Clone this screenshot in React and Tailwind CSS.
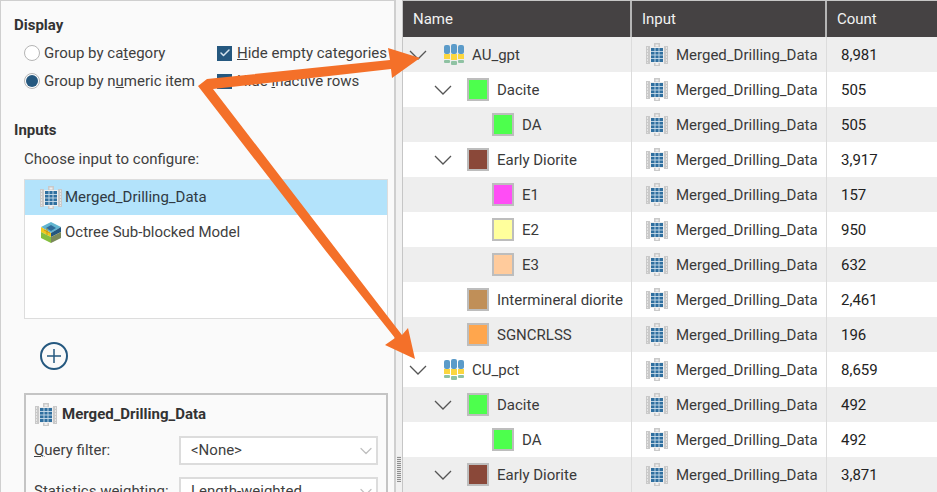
import React from 'react';
import { ChevronDown, Check } from 'lucide-react';

const rows = [
  { level: 0, name: 'AU_gpt', count: '8,981', open: true },
  { level: 1, name: 'Dacite', color: 'bg-[#4dff4d]', count: '505', open: true },
  { level: 2, name: 'DA', color: 'bg-[#4dff4d]', count: '505' },
  { level: 1, name: 'Early Diorite', color: 'bg-[#8a4839]', count: '3,917', open: true },
  { level: 2, name: 'E1', color: 'bg-[#ff4df5]', count: '157' },
  { level: 2, name: 'E2', color: 'bg-[#ffff9c]', count: '950' },
  { level: 2, name: 'E3', color: 'bg-[#ffcb9c]', count: '632' },
  { level: 1, name: 'Intermineral diorite', color: 'bg-[#c08f58]', count: '2,461' },
  { level: 1, name: 'SGNCRLSS', color: 'bg-[#ffa64d]', count: '196' },
  { level: 0, name: 'CU_pct', count: '8,659', open: true },
  { level: 1, name: 'Dacite', color: 'bg-[#4dff4d]', count: '492', open: true },
  { level: 2, name: 'DA', color: 'bg-[#4dff4d]', count: '492' },
  { level: 1, name: 'Early Diorite', color: 'bg-[#8a4839]', count: '3,871', open: true },
];

const TableIcon = () => (
  <svg width="22" height="23" viewBox="0 0 22 23" className="flex-shrink-0">
    <path d="M0 3h4v18H0zM18 3h4v18h-4zM8 0h6v5H8zM8 19h6v4H8z" fill="#c9c9c9" />
    <path d="M1.5 4v16M20.5 4v16" stroke="#e6e6e6" strokeWidth="1" strokeDasharray="2 1" />
    <rect x="9.5" y="1.5" width="3" height="2" fill="#f0f0f0" />
    <rect x="9.5" y="20" width="3" height="2" fill="#f0f0f0" />
    <rect x="4" y="4" width="14" height="16" fill="#eeeeee" />
    <rect x="5" y="5" width="12" height="14" fill="#2f6f9f" />
    <path d="M5 8.5h12M5 12h12M5 15.5h12M9 5v14M13 5v14" stroke="#c9dcea" strokeWidth="0.9" />
  </svg>
);

const NumericIcon = () => (
  <svg width="22" height="23" viewBox="0 0 22 23" className="flex-shrink-0">
    <rect x="1" y="2" width="6" height="9" rx="2" fill="#5b9bc9" />
    <rect x="8" y="1" width="6" height="10" rx="2" fill="#5b9bc9" />
    <rect x="15" y="2" width="6" height="9" rx="2" fill="#5b9bc9" />
    <rect x="1" y="11" width="6" height="5" fill="#fbd63f" />
    <rect x="8" y="11" width="6" height="6" fill="#fbd63f" />
    <rect x="15" y="11" width="6" height="5" fill="#fbd63f" />
    <rect x="1" y="17" width="6" height="3" rx="1" fill="#8fc2a3" />
    <rect x="8" y="18" width="6" height="4" rx="1" fill="#8fc2a3" />
    <rect x="15" y="17" width="6" height="3" rx="1" fill="#8fc2a3" />
  </svg>
);

const OctreeIcon = () => (
  <svg width="22" height="23" viewBox="0 0 22 23" className="flex-shrink-0">
    <path d="M11 1l10 5-10 6L1 6z" fill="#62b5d0" />
    <path d="M1 6l10 6v4L1 11z" fill="#f2c81e" />
    <path d="M21 6l-10 6v4l10-5z" fill="#24577f" />
    <path d="M1 11l10 5v6L1 17z" fill="#86bf3f" />
    <path d="M21 11l-10 5v6l10-5z" fill="#7a8a5a" />
    <path d="M6 7l5 3 5-3-5-3z" fill="#2f6b99" />
    <path d="M4 9l6 3M7 7v7" stroke="#b98e18" strokeWidth="0.8" />
  </svg>
);

const TreeChevron = () => (
  <svg width="18" height="10" viewBox="0 0 18 10">
    <path d="M1 1l8 8 8-8" fill="none" stroke="#555555" strokeWidth="1.3" />
  </svg>
);

const Swatch = ({ color }) => (
  <span className={`w-[22px] h-[23px] border-2 border-[#bdbdbd] flex-shrink-0 ${color}`} />
);

const Radio = ({ on }) => (
  <span className="w-4 h-4 rounded-full border border-[#b5b5b5] bg-white flex items-center justify-center flex-shrink-0">
    {on && <span className="w-3 h-3 rounded-full bg-[#25587f]" />}
  </span>
);

const CheckBox = () => (
  <span className="w-[15px] h-[15px] bg-[#25587f] flex items-center justify-center flex-shrink-0">
    <Check className="w-3 h-3 text-[#d5e4ef]" strokeWidth={3} />
  </span>
);

const Combo = ({ value }) => (
  <div className="w-[199px] h-[29px] flex-shrink-0 border-2 border-[#dcdcdc] bg-white flex items-center justify-between pl-[10px]">
    <span>{value}</span>
    <ChevronDown className="w-5 h-5 text-[#c0c0c0]" strokeWidth={1.5} />
  </div>
);

const TreeRow = ({ row, index }) => (
  <div className={`h-[35px] flex items-center text-[#3a3a3a] ${index % 2 === 0 ? 'bg-[#eeeeee]' : 'bg-white'}`}>
    <div className={`w-[229px] h-full flex items-center flex-shrink-0 border-r border-[#dcdcdc] ${row.level === 1 ? 'pl-[31px]' : row.level === 2 ? 'pl-[89px]' : 'pl-[6px]'}`}>
      {row.level < 2 && (
        <span className={`w-[18px] flex-shrink-0 flex items-center ${row.level === 0 ? 'mr-[16px]' : 'mr-[15px]'}`}>
          {row.open && <TreeChevron />}
        </span>
      )}
      {row.level === 0 ? <NumericIcon /> : <Swatch color={row.color} />}
      <span className={`pt-px whitespace-nowrap ${row.level === 0 ? 'ml-[7px]' : 'ml-[8px]'}`}>{row.name}</span>
    </div>
    <div className="w-[195px] h-full flex items-center gap-[8px] pl-[14px] flex-shrink-0 border-r border-[#dcdcdc]">
      <TableIcon />
      <span className="pt-px whitespace-nowrap">Merged_Drilling_Data</span>
    </div>
    <span className="pl-[14px] pt-px text-[#222222]">{row.count}</span>
  </div>
);

export default function App() {
  return (
    <div className="relative w-[937px] h-[492px] overflow-hidden flex bg-[#f1f1f1] text-[15px] text-[#3f3f3f] font-['Roboto',sans-serif]">
      <div className="w-[396px] h-[492px] flex-shrink-0 overflow-hidden bg-[#fafafa] border-t border-l border-r-2 border-[#cfcfcf] pt-[14px] pl-[13px] pr-[6px]">
        <h3 className="font-bold text-[#333333] leading-[20px]">Display</h3>
        <div className="mt-[10px] ml-[10px] flex">
          <div className="w-[193px] flex flex-col gap-[12px]">
            <div className="h-4 flex items-center gap-[4px]">
              <Radio />
              <span>Group by ca<span className="underline">t</span>egory</span>
            </div>
            <div className="h-4 flex items-center gap-[4px]">
              <Radio on />
              <span>Group by n<span className="underline">u</span>meric item</span>
            </div>
          </div>
          <div className="flex flex-col gap-[12px]">
            <div className="h-4 flex items-center gap-[5px] whitespace-nowrap">
              <CheckBox />
              <span><span className="underline">H</span>ide empty categories</span>
            </div>
            <div className="h-4 flex items-center gap-[5px] whitespace-nowrap">
              <CheckBox />
              <span>Hide <span className="underline">i</span>nactive rows</span>
            </div>
          </div>
        </div>
        <h3 className="mt-[31px] font-bold text-[#333333] leading-[20px]">Inputs</h3>
        <p className="mt-[9px] ml-[10px] leading-[20px]">Choose input to configure:</p>
        <div className="mt-[10px] ml-[10px] w-[364px] h-[140px] border border-[#dddddd] bg-white">
          <div className="h-[35px] bg-[#b3e3fb] flex items-center gap-[3px] pl-[15px] text-[#2f3a44]">
            <TableIcon />
            <span>Merged_Drilling_Data</span>
          </div>
          <div className="h-[35px] flex items-center gap-[3px] pl-[15px]">
            <OctreeIcon />
            <span>Octree Sub-blocked Model</span>
          </div>
        </div>
        <div className="mt-[23px] ml-[26px] w-[28px] h-[28px] rounded-full border-2 border-[#25587f] flex items-center justify-center">
          <svg width="16" height="16" viewBox="0 0 16 16">
            <path d="M8 1v14M1 8h14" stroke="#25587f" strokeWidth="1.5" />
          </svg>
        </div>
        <div className="mt-[23px] ml-[10px] w-[364px] h-[120px] border-2 border-[#c4c4c4] pt-[8px] pl-[8px] pr-[8px]">
          <div className="flex items-center gap-[5px] ml-[1px] font-bold text-[#333333]">
            <TableIcon />
            <span>Merged_Drilling_Data</span>
          </div>
          <div className="mt-[10px] flex items-center justify-between">
            <span><span className="underline">Q</span>uery filter:</span>
            <Combo value="<None>" />
          </div>
          <div className="mt-[12px] flex items-center justify-between">
            <span>Statistics weighting:</span>
            <Combo value="Length-weighted" />
          </div>
        </div>
      </div>

      <div className="w-[6px] h-[492px] flex-shrink-0 flex flex-col justify-end items-center pb-[10px]">
        <div className="w-[4px] h-[26px] bg-[repeating-linear-gradient(0deg,#8f8f8f_0,#8f8f8f_1px,#e8e8e8_1px,#e8e8e8_2px)]" />
      </div>

      <div className="flex-1 min-w-0 h-[492px] overflow-hidden bg-white border-l border-t border-[#c6c6c6]">
        <div className="h-[36px] bg-[#454243] flex items-center text-[#f2f2f2]">
          <span className="w-[229px] pl-[10px] flex-shrink-0 h-full flex items-center border-r-2 border-[#b5b5b5]">Name</span>
          <span className="w-[195px] pl-[10px] flex-shrink-0 h-full flex items-center border-r-2 border-[#b5b5b5]">Input</span>
          <span className="pl-[10px]">Count</span>
        </div>
        {rows.map((row, i) => (
          <TreeRow key={i} row={row} index={i} />
        ))}
      </div>

      {/* callout arrows drawn over the screenshot */}
      <svg width="937" height="492" viewBox="0 0 937 492" className="absolute left-0 top-0 pointer-events-none">
        <path
          d="M198 86L207 79L390 60L388 48L420 58L392 78L391 69L213 89L402 335L408 328L415 359L385 345L395 338L325 250Z"
          fill="#f47029"
        />
      </svg>
    </div>
  );
}
